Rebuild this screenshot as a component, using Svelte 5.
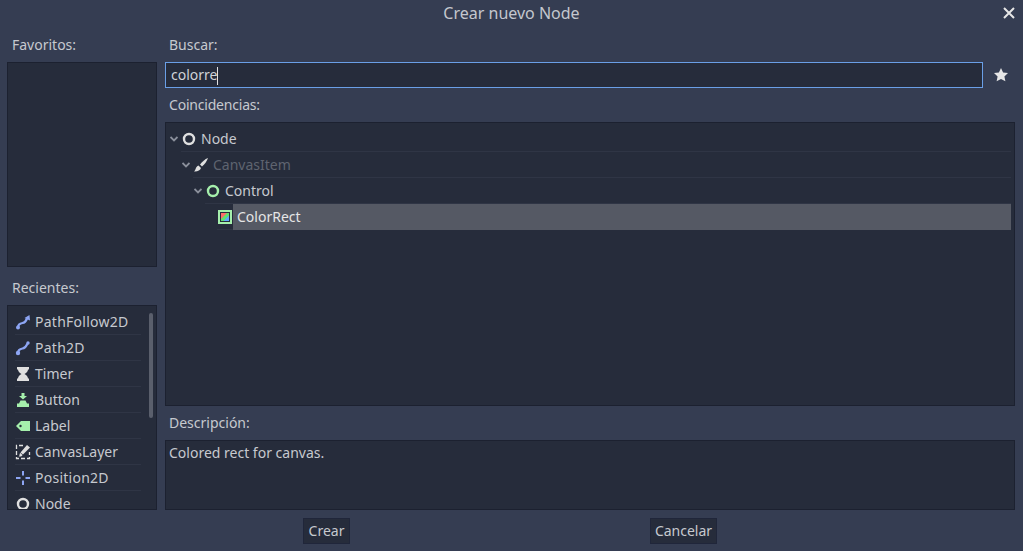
<script lang="ts">
	const recents = [
		{ name: 'PathFollow2D', icon: 'follow', wide: true },
		{ name: 'Path2D', icon: 'path', wide: true },
		{ name: 'Timer', icon: 'timer' },
		{ name: 'Button', icon: 'button' },
		{ name: 'Label', icon: 'label' },
		{ name: 'CanvasLayer', icon: 'layer' },
		{ name: 'Position2D', icon: 'position', wide: true },
		{ name: 'Node', icon: 'node' }
	];
	const tree = [
		{ name: 'Node', icon: 'node', depth: 0, arrow: true },
		{ name: 'CanvasItem', icon: 'brush', depth: 1, arrow: true, dim: true },
		{ name: 'Control', icon: 'control', depth: 2, arrow: true },
		{ name: 'ColorRect', icon: 'rect', depth: 3, arrow: false, selected: true }
	];
</script>

{#snippet icon(kind: string)}
	<svg class="ico" viewBox="0 0 16 16" width="16" height="16">
		{#if kind === 'follow'}
			<path d="M3 13.500c0-3 1.500-4 4.500-4.500 3-.5 3.500-2 4.500-4.500" fill="none" stroke="#8da5f3" stroke-width="2.200" />
			<circle cx="3" cy="13.500" r="2" fill="#8da5f3" />
			<path d="M9.500 4l5-3 .5 5.500z" fill="#8da5f3" />
		{:else if kind === 'path'}
			<path d="M3 13c0-3 1.500-4 4.500-4.500 3-.5 3.500-2 5-5" fill="none" stroke="#8da5f3" stroke-width="2.200" />
			<circle cx="3" cy="13" r="2.200" fill="#8da5f3" />
			<circle cx="13" cy="3" r="1.700" fill="#8da5f3" />
		{:else if kind === 'timer'}
			<path d="M2 1h12v2.500h-1c0 2.500-2 3.500-3.500 4.500 1.500 1 3.500 2 3.500 4.500h1V15H2v-2.500h1C3 10 5 9 6.500 8 5 7 3 6 3 3.500H2z" fill="#e0e0e0" />
		{:else if kind === 'button'}
			<path d="M6.500 1h3v3H12L8 7.500 4 4h2.500zM5.500 8.500h5l1.500 3H4zM2 11.500h12V15H2z" fill="#a5efac" />
		{:else if kind === 'label'}
			<path d="M6 3h9v10H6L1 8z" fill="#a5efac" />
			<circle cx="5.500" cy="8" r="1.200" fill="#262c3b" />
		{:else if kind === 'layer'}
			<path d="M8 1.500H1.500v13h13V8" fill="none" stroke="#e0e0e0" stroke-width="1.300" stroke-dasharray="4 2" />
			<path d="M5.500 8.500L12 1l3 2.500-7 7z" fill="#e0e0e0" />
			<path d="M3.500 12.500c1.500 0 .5-3 2-3.500l2 2c-.5 1.500-2 1.800-4 1.500z" fill="#e0e0e0" />
		{:else if kind === 'position'}
			<path d="M8 1v4.500M8 10.500V15M1 8h4.500M10.500 8H15" stroke="#8da5f3" stroke-width="2" fill="none" />
		{:else if kind === 'node'}
			<circle cx="8" cy="8" r="5" fill="none" stroke="#e0e0e0" stroke-width="2.400" />
		{:else if kind === 'control'}
			<circle cx="8" cy="8" r="5" fill="none" stroke="#a5efac" stroke-width="2.400" />
		{:else if kind === 'brush'}
			<path d="M15 1c-3 1-6 4-8 6.500l2 2C11.500 7.500 14 4 15 1z" fill="#e0e0e0" />
			<path d="M5.500 8.500l2.500 2.500c-.8 2.500-3.500 3.800-7 3.500 1.800-1 1.500-5 4.500-6z" fill="#e0e0e0" />
		{:else if kind === 'rect'}
			<rect x="2" y="2" width="12" height="12" fill="#262c3b" stroke="#a5efac" stroke-width="2" />
			<path d="M4 4h8v8H4z" fill="#5fe06f" />
			<path d="M4 4h6L4 10z" fill="#ff6a6a" />
			<path d="M12 6.500V12H6.500z" fill="#5fa8ff" />
		{/if}
	</svg>
{/snippet}

<div class="dialog">
	<header class="title">
		<span>Crear nuevo Node</span>
		<svg class="close" viewBox="0 0 12 12" width="12" height="12"><path d="M1 1l10 10M11 1L1 11" stroke="#e6e6e6" stroke-width="2" /></svg>
	</header>

	<div class="body">
		<aside class="side">
			<div class="label">Favoritos:</div>
			<div class="panel fav"></div>
			<div class="label rec-label">Recientes:</div>
			<div class="panel rec">
				<ul>
					{#each recents as r}
						<li>
							{@render icon(r.icon)}
							<span class:wide={r.wide}>{r.name}</span>
						</li>
					{/each}
				</ul>
				<div class="scroll"><div class="thumb"></div></div>
			</div>
		</aside>

		<main class="main">
			<div class="label">Buscar:</div>
			<div class="search">
				<div class="input">colorre<i class="caret"></i></div>
				<svg class="star" viewBox="0 0 16 16" width="16" height="16"><path d="M8 1l2.100 4.500 4.900.6-3.600 3.300 1 4.900L8 11.900l-4.400 2.400 1-4.900L1 6.100l4.900-.6z" fill="#e6e6e6" /></svg>
			</div>
			<div class="label narrow">Coincidencias:</div>
			<div class="panel tree">
				{#each tree as t}
					<div class="row" class:d1={t.depth === 1} class:d2={t.depth === 2} class:d3={t.depth === 3}>
						{#if t.arrow}
							<svg class="arrow" viewBox="0 0 8 6" width="8" height="6"><path d="M.5 1l3.500 3.500L7.500 1" fill="none" stroke="#8b909c" stroke-width="1.800" /></svg>
						{/if}
						{@render icon(t.icon)}
						<span class="name" class:dim={t.dim} class:sel={t.selected}>{t.name}</span>
					</div>
				{/each}
			</div>
			<div class="label">Descripción:</div>
			<div class="panel desc">Colored rect for canvas.</div>
		</main>
	</div>

	<footer class="foot">
		<button class="crear">Crear</button>
		<button class="cancelar">Cancelar</button>
	</footer>
</div>

<style>
	:global(body) {
		margin: 0;
		background: #353d52;
	}
	.dialog {
		width: 1023px;
		height: 551px;
		overflow: hidden;
		background: #353d52;
		color: #c6c9cf;
		font-family: 'Noto Sans', sans-serif;
		font-size: 14px;
		line-height: 18px;
	}
	.title {
		height: 26px;
		position: relative;
		display: flex;
		align-items: center;
		justify-content: center;
		font-size: 16px;
		color: #c4c7ce;
	}
	.close {
		position: absolute;
		right: 8px;
		top: 7px;
	}
	.body {
		display: flex;
		gap: 8px;
		padding: 10px 8px 0 7px;
	}
	.side {
		width: 150px;
		display: flex;
		flex-direction: column;
	}
	.main {
		flex: 1;
		display: flex;
		flex-direction: column;
	}
	.label {
		height: 18px;
		padding-left: 5px;
		margin-bottom: 8px;
	}
	.main .label {
		padding-left: 4px;
	}
	.narrow {
		letter-spacing: -0.2px;
	}
	.wide {
		letter-spacing: 0.25px;
	}
	.panel {
		box-sizing: border-box;
		background: #262c3b;
		border: 1px solid #1c2130;
	}
	.fav {
		height: 205px;
	}
	.rec-label {
		margin-top: 12px;
	}
	.rec {
		height: 205px;
		position: relative;
		overflow: hidden;
		padding: 3px 0 0 7px;
	}
	ul {
		list-style: none;
		margin: 0;
		padding: 0;
		width: 126px;
	}
	li {
		height: 25px;
		border-bottom: 1px solid #2f3545;
		display: flex;
		align-items: center;
		gap: 4px;
	}
	.ico {
		flex: none;
	}
	.scroll {
		position: absolute;
		right: 3px;
		top: 7px;
		width: 4px;
	}
	.thumb {
		height: 105px;
		background: #5a5f6c;
		border-radius: 2px;
	}
	.search {
		display: flex;
		align-items: center;
		gap: 10px;
		margin-bottom: 8px;
	}
	.input {
		box-sizing: border-box;
		flex: none;
		width: 818px;
		height: 26px;
		background: #262c3b;
		border: 1px solid #6a9fe6;
		padding: 3px 0 0 5px;
		display: flex;
		align-items: flex-start;
		color: #d0d3d8;
	}
	.caret {
		width: 1px;
		height: 18px;
		background: #e0e0e0;
		margin-top: 1px;
	}
	.tree {
		height: 284px;
		margin-bottom: 8px;
		padding: 3px 3px 0 3px;
	}
	.row {
		height: 25px;
		display: flex;
		align-items: center;
		border-bottom: 1px solid #2f3545;
		margin-left: 12px;
	}
	.row.d1 {
		margin-left: 24px;
	}
	.row.d2 {
		margin-left: 36px;
	}
	.row.d3 {
		margin-left: 48px;
	}
	.arrow {
		flex: none;
		margin: 0 3px 0 -11px;
	}
	.name {
		margin-left: 4px;
	}
	.dim {
		color: #5f6470;
	}
	.sel {
		flex: 1;
		margin-left: 0;
		padding-left: 4px;
		height: 26px;
		line-height: 26px;
		background: #555964;
		color: #e6e6e6;
	}
	.desc {
		height: 70px;
		padding: 3px;
	}
	.foot {
		display: flex;
		padding: 8px 0 0 303px;
	}
	button {
		box-sizing: border-box;
		height: 26px;
		background: #262c3b;
		border: 1px solid #20263a;
		color: #c6c9cf;
		font: inherit;
		padding: 0;
	}
	.crear {
		width: 47px;
	}
	.cancelar {
		width: 67px;
		margin-left: 300px;
	}
</style>
